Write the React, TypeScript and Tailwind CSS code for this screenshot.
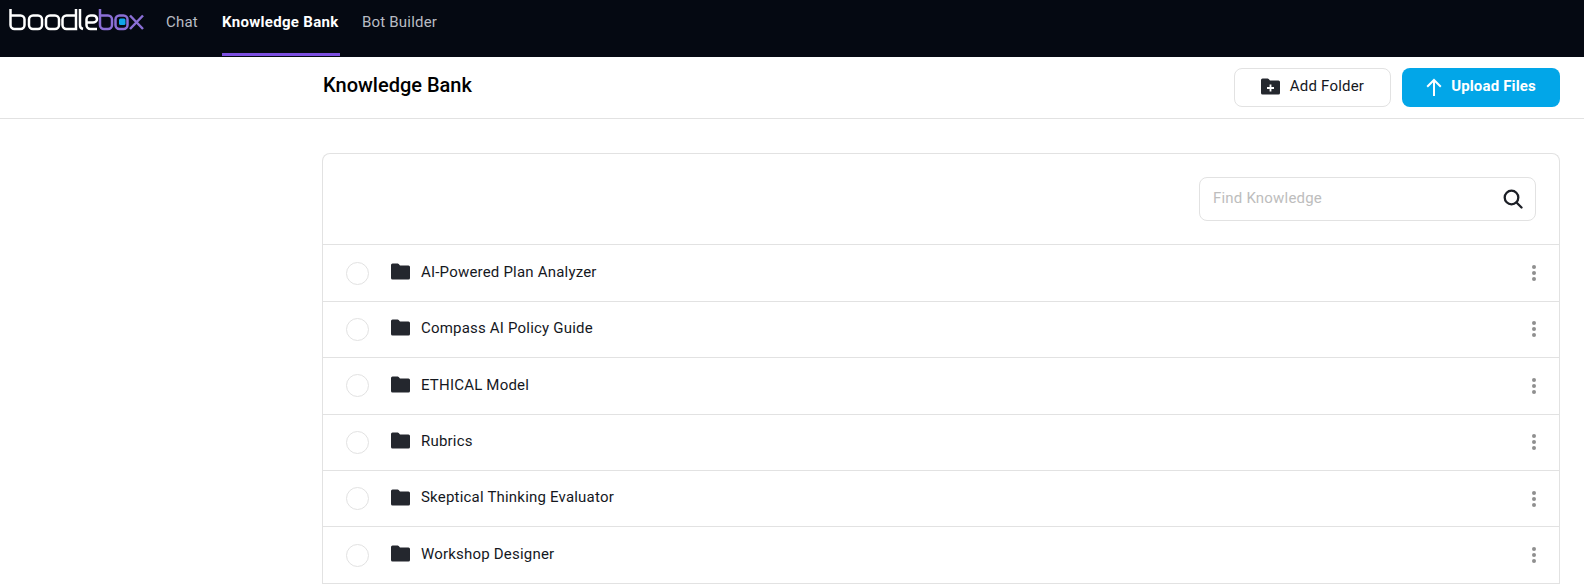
const folders = [
  "AI-Powered Plan Analyzer",
  "Compass AI Policy Guide",
  "ETHICAL Model",
  "Rubrics",
  "Skeptical Thinking Evaluator",
  "Workshop Designer",
];

function Logo() {
  return (
    <svg width="136" height="22" viewBox="0 0 136 22" fill="none" strokeWidth="2.5" aria-label="boodlebox">
      <g stroke="#ffffff">
        <path d="M1.500 0V16a4 4 0 0 0 4 4h6a4 4 0 0 0 4-4v-5.500a4 4 0 0 0-4-4h-10" />
        <rect x="20" y="6.500" width="13" height="13.500" rx="4" />
        <rect x="37" y="6.500" width="13" height="13.500" rx="4" />
        <path d="M67 0V20h-9.500a4 4 0 0 1-4-4v-5.500a4 4 0 0 1 4-4H67" />
        <path d="M71 0V16a4 4 0 0 0 3 4" />
        <path d="M88 20h-6.500a4 4 0 0 1-4-4v-5.500a4 4 0 0 1 4-4h2.500a4 4 0 0 1 4 3.500c0 2-2 3.500-4 3.500h-6.500" />
      </g>
      <g stroke="#8b6fd6">
        <path d="M91 0V16a4 4 0 0 0 4 4h4a4 4 0 0 0 4-4v-5.500a4 4 0 0 0-4-4h-8" />
        <rect x="106.500" y="6.500" width="12" height="13.500" rx="4" />
        <path d="M121 6.500l13 13.500M134 6.500l-13 13.500" />
      </g>
      <rect x="110" y="9.500" width="6.500" height="6.500" rx="1.500" fill="#0ea5e9" />
    </svg>
  );
}

function FolderIcon({ plus = false }: { plus?: boolean }) {
  return (
    <svg width="19" height="17" viewBox="0 0 19 17" className="shrink-0">
      <path
        d="M1.500 0.500h5.200a1.500 1.500 0 0 1 1 .4L9 2.500h8.500A1.500 1.500 0 0 1 19 4v11a1.500 1.500 0 0 1-1.500 1.500h-16A1.500 1.500 0 0 1 0 15V2A1.500 1.500 0 0 1 1.500 0.500z"
        fill="#24272e"
      />
      {plus && <path d="M9.500 6.500v7M6 10h7" stroke="#ffffff" strokeWidth="1.800" />}
    </svg>
  );
}

function UploadArrow() {
  return (
    <svg width="16" height="18" viewBox="0 0 16 18" fill="none" stroke="#ffffff" strokeWidth="2" className="shrink-0">
      <path d="M8 18V2M1.200 8.800 8 2l6.800 6.800" />
    </svg>
  );
}

function SearchIcon() {
  return (
    <svg width="20" height="20" viewBox="0 0 20 20" fill="none" stroke="#1c1f26" strokeWidth="2.300" strokeLinecap="round" className="shrink-0">
      <circle cx="8.500" cy="8.500" r="6.800" />
      <path d="M13.500 13.500l5 5" />
    </svg>
  );
}

function Dots() {
  return (
    <div className="flex flex-col gap-[2px]">
      <span className="w-1 h-1 rounded-full bg-[#8f8f8f]" />
      <span className="w-1 h-1 rounded-full bg-[#8f8f8f]" />
      <span className="w-1 h-1 rounded-full bg-[#8f8f8f]" />
    </div>
  );
}

export default function App() {
  return (
    <div className="h-[586px] overflow-hidden bg-white font-['Roboto',sans-serif] text-[#15181e]">
      {/* Top nav */}
      <nav className="h-[57px] bg-[#050912] flex items-start pl-[9px]">
        <div className="mt-[9px]">
          <Logo />
        </div>
        <div className="flex ml-[21px] gap-[22px] text-[15px] tracking-[0.2px] text-[#b9bcc4]">
          <a className="pt-[13px] leading-[18px] w-[34px]">Chat</a>
          <a className="h-[56px] pt-[13px] leading-[18px] font-bold tracking-[0.3px] text-white border-b-[3px] border-[#7c4fe0] w-[118px] whitespace-nowrap">
            Knowledge Bank
          </a>
          <a className="pt-[13px] leading-[18px]">Bot Builder</a>
        </div>
      </nav>

      {/* Title bar */}
      <header className="h-[62px] border-b border-[#e2e2e2] pl-[323px] pr-6 flex items-start justify-between">
        <h1 className="mt-4 text-xl leading-6 font-medium text-black">Knowledge Bank</h1>
        <div className="mt-[11px] flex gap-[11px]">
          <button className="w-[157px] h-[39px] rounded-lg border border-[#e2e2e2] bg-white flex items-center justify-center gap-[10px] pb-[2px] text-[15px] tracking-[0.2px] text-[#15181e]">
            <FolderIcon plus />
            Add Folder
          </button>
          <button className="w-[158px] h-[39px] rounded-lg bg-[#02a6e8] flex items-center justify-center gap-[9px] pb-[2px] text-[15px] tracking-[0.15px] font-bold text-white">
            <UploadArrow />
            Upload Files
          </button>
        </div>
      </header>

      {/* Table */}
      <main className="pl-[322px] pr-6 pt-[34px]">
        <section className="rounded-t-lg border border-[#e2e2e2] border-b-0">
          <div className="h-[91px] flex items-start justify-end pr-[23px] pt-[23px] border-b border-[#e2e2e2]">
            <div className="w-[337px] h-[44px] rounded-lg border border-[#e2e2e2] flex items-center justify-between pl-[13px] pr-[12px]">
              <span className="pb-[2px] text-[15px] tracking-[0.2px] text-[#bdbdbd]">Find Knowledge</span>
              <SearchIcon />
            </div>
          </div>
          <div className="pt-[0.4px]">
            {folders.map((name) => (
              <div key={name} className="h-[56.400px] flex items-center border-b border-[#e2e2e2] pl-[23px] pr-[23px]">
                <span className="w-[23px] h-[23px] rounded-full border border-[#e2e2e2] shrink-0" />
                <span className="ml-[22px] pb-[3px]">
                  <FolderIcon />
                </span>
                <span className="ml-[11px] pb-[2px] text-[15px] tracking-[0.2px]">{name}</span>
                <span className="ml-auto">
                  <Dots />
                </span>
              </div>
            ))}
          </div>
        </section>
      </main>
    </div>
  );
}
